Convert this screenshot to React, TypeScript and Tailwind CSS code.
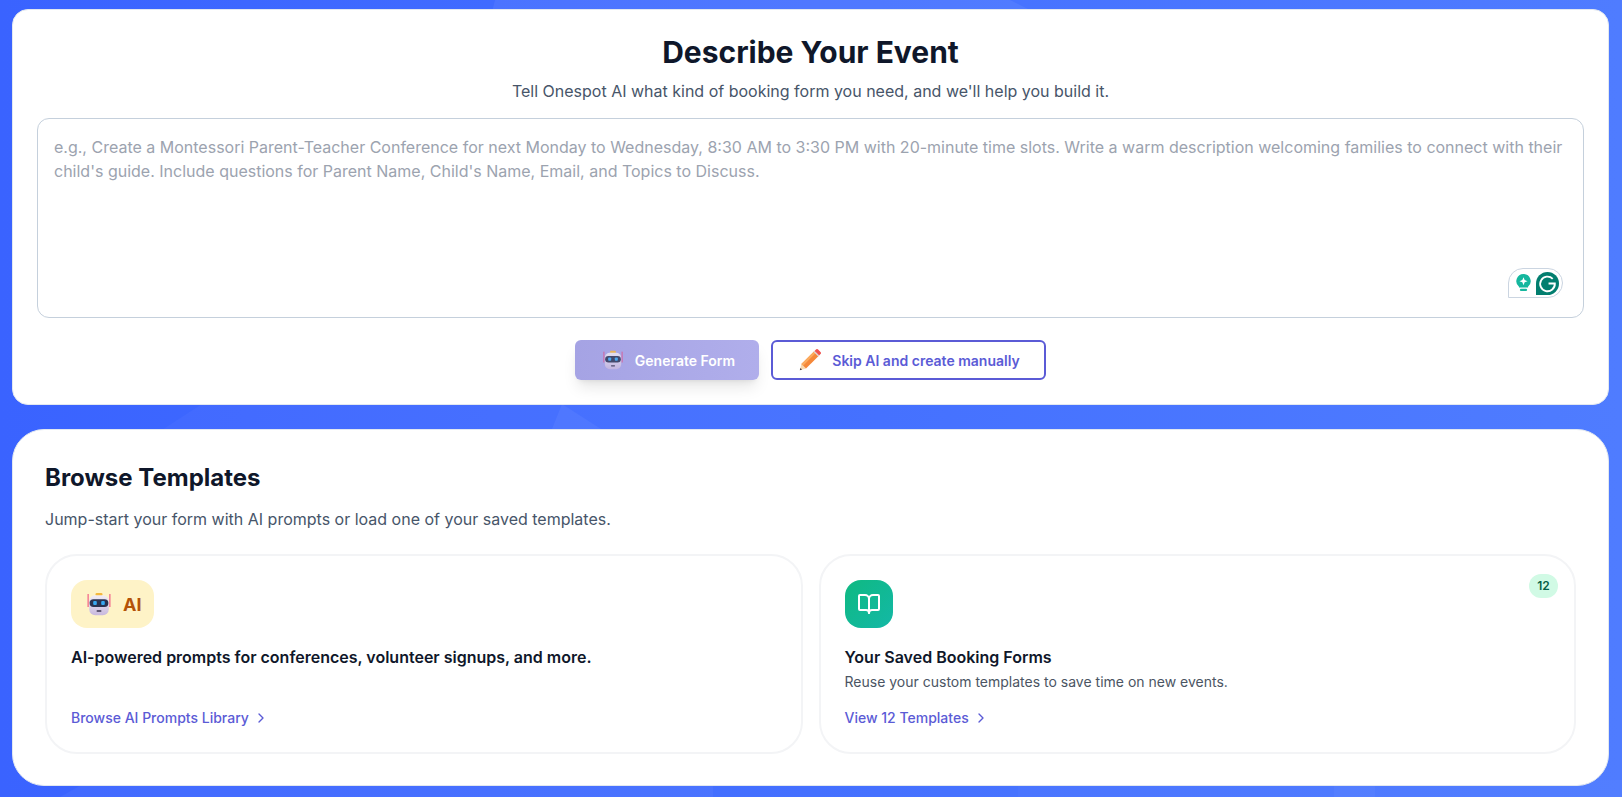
import { BookOpen, ChevronRight } from 'lucide-react'

function RobotIcon({ size = 24 }: { size?: number }) {
  return (
    <svg width={size} height={size} viewBox="0 0 24 24" className="shrink-0">
      <defs>
        <linearGradient id="robot-body" x1="0" y1="0" x2="0" y2="1">
          <stop offset="0" stopColor="#f1edf5" />
          <stop offset="1" stopColor="#c9b9de" />
        </linearGradient>
      </defs>
      <rect x="0.6" y="2" width="1" height="13" fill="#f0437a" />
      <rect x="22.4" y="2" width="1" height="13" fill="#f0437a" />
      <rect x="8.5" y="1" width="7" height="3" rx="1.2" fill="#f5b83d" />
      <rect x="2.2" y="3.2" width="19.6" height="20" rx="6" fill="url(#robot-body)" />
      <rect x="2.6" y="7.200" width="18.800" height="7.800" rx="3.900" fill="#2b3350" />
      <rect x="6.200" y="9" width="3.600" height="4" rx="1" fill="#38a8f0" />
      <rect x="14.200" y="9" width="3.600" height="4" rx="1" fill="#38a8f0" />
      <rect x="9.500" y="18.200" width="5" height="1.500" rx="0.700" fill="#3b3550" />
    </svg>
  )
}

function PencilIcon() {
  return (
    <svg width="22" height="22" viewBox="0 0 22 22" className="shrink-0">
      <path d="M0.800 21.200 2.400 15 7 19.600z" fill="#f7d9b0" />
      <path d="M0.800 21.200 1.400 18.900 3.100 20.600z" fill="#4a3a3a" />
      <path d="M2.400 15 15.500 1.900 20.100 6.500 7 19.600z" fill="#f5883a" />
      <path d="M2.400 15 15.500 1.900 17.200 3.600 4.100 16.700z" fill="#fbab5e" />
      <path d="M15.500 1.900 17 0.500a1.500 1.500 0 0 1 2.100 0l2.400 2.400a1.500 1.500 0 0 1 0 2.100l-1.400 1.500z" fill="#f0524f" />
      <path d="M14.600 2.800 15.500 1.900 20.100 6.500 19.200 7.400z" fill="#d9d9e3" />
    </svg>
  )
}

function GrammarlyBadge() {
  return (
    <div className="absolute right-[21px] bottom-[20px] flex h-[30px] w-[55px] items-center gap-[5px] rounded-[15px] rounded-bl-none border border-[#cbd5e1] bg-white pl-[7px]">
      <svg width="15" height="18" viewBox="0 0 16 20" className="shrink-0">
        <path d="M8 0a8 8 0 0 1 5 14.200V15H3v-.800A8 8 0 0 1 8 0z" fill="#15b79e" />
        <rect x="4" y="16.500" width="8" height="2.500" rx="1.200" fill="#15b79e" />
        <path d="M8 3.500 9.300 6.700 12.500 8 9.300 9.300 8 12.500 6.700 9.300 3.500 8 6.700 6.700z" fill="#fff" />
      </svg>
      <svg width="23" height="23" viewBox="0 0 22 22" className="shrink-0">
        <path d="M11 0a11 11 0 0 1 0 22H0V11A11 11 0 0 1 11 0z" fill="#027e6f" />
        <path d="M16 6.500A7 7 0 1 0 18 11h-6" fill="none" stroke="#fff" strokeWidth="1.800" />
      </svg>
    </div>
  )
}

export default function App() {
  return (
    <div className="relative min-h-screen overflow-hidden bg-gradient-to-r from-[#3a63ff] to-[#4f7cff] pt-[9px] pr-[13px] pb-[9px] pl-[12px] font-['Inter',sans-serif]">
      {/* low-poly background */}
      <svg className="absolute inset-0 h-full w-full" viewBox="0 0 1622 797" preserveAspectRatio="none">
        <path d="M495 0H1010L1130 60H480z" fill="#ffffff" fillOpacity="0.06" />
        <path d="M100 470 202 404H800V430H166z" fill="#ffffff" fillOpacity="0.03" />
        <path d="M562 404 552 429H601z" fill="#ffffff" fillOpacity="0.05" />
        <path d="M60 797 90 780H713V797z" fill="#ffffff" fillOpacity="0.04" />
        <path d="M1018 780H1622V797H1018z" fill="#ffffff" fillOpacity="0.02" />
        <path d="M1334 780H1375V797H1334z" fill="#ffffff" fillOpacity="0.03" />
      </svg>

      <div className="relative flex flex-col gap-[24px]">
        <section className="flex h-[396px] flex-col items-center rounded-[16px] border border-[#e2e8f0] bg-white px-[24px] pt-[24px]">
          <h1 className="text-[30px] leading-[36px] font-bold text-[#0f172a]">Describe Your Event</h1>
          <p className="mt-[9px] text-[16px] leading-[24px] text-[#475569]">
            Tell Onespot AI what kind of booking form you need, and we'll help you build it.
          </p>
          <div className="relative mt-[15px] h-[200px] w-full">
            <textarea
              readOnly
              className="h-full w-full resize-none rounded-[12px] border border-[#c5d0dc] px-[16px] py-[16px] text-[16px] leading-[24px] outline-none placeholder:text-[#9ca3af]"
              placeholder="e.g., Create a Montessori Parent-Teacher Conference for next Monday to Wednesday, 8:30 AM to 3:30 PM with 20-minute time slots. Write a warm description welcoming families to connect with their child's guide. Include questions for Parent Name, Child's Name, Email, and Topics to Discuss."
            />
            <GrammarlyBadge />
          </div>
          <div className="mt-[22px] flex items-center gap-[12px]">
            <button className="flex h-[40px] w-[184px] items-center justify-center gap-[12px] rounded-[6px] bg-gradient-to-r from-[#a5a3e4] to-[#b0aeeb] pl-[4px] text-[14px] font-semibold text-white shadow-lg shadow-black/10">
              <span className="opacity-80"><RobotIcon size={20} /></span>
              Generate Form
            </button>
            <button className="flex h-[40px] w-[275px] items-center justify-center gap-[11px] rounded-[6px] border-2 border-[#5b5bd6] bg-white pl-[2px] text-[14px] font-semibold text-[#5b5bd6]">
              <PencilIcon />
              Skip AI and create manually
            </button>
          </div>
        </section>

        <section className="rounded-[32px] border border-[#e2e8f0] bg-white px-[32px] pt-[32px] pb-[31px]">
          <h2 className="text-[24px] leading-[32px] font-bold text-[#0f172a]">Browse Templates</h2>
          <p className="mt-[13px] text-[16px] leading-[24px] text-[#475569]">
            Jump-start your form with AI prompts or load one of your saved templates.
          </p>
          <div className="mt-[23px] grid grid-cols-2 gap-[16px]">
            <div className="flex h-[200px] flex-col rounded-[32px] border-2 border-[#f3f4f6] bg-white p-[24px]">
              <div className="flex h-[48px] w-[83px] items-center gap-[12px] rounded-[16px] bg-[#fef3c7] pl-[16px] text-[18px] font-bold text-[#b45309]">
                <RobotIcon />
                AI
              </div>
              <p className="mt-[17px] text-[16px] leading-[24px] font-semibold text-[#0f172a]">
                AI-powered prompts for conferences, volunteer signups, and more.
              </p>
              <a className="mt-auto flex items-center gap-[4px] text-[14px] leading-[20px] font-medium text-[#5b5bd6]">
                Browse AI Prompts Library
                <ChevronRight size={16} strokeWidth={2} />
              </a>
            </div>
            <div className="relative flex h-[200px] flex-col rounded-[32px] border-2 border-[#f3f4f6] bg-white p-[24px]">
              <span className="absolute top-[18px] right-[16px] flex h-[24px] w-[29px] items-center justify-center rounded-full bg-[#d1fae5] text-[12px] font-semibold text-[#065f46]">
                12
              </span>
              <div className="flex h-[48px] w-[48px] items-center justify-center rounded-[16px] bg-gradient-to-br from-[#10b981] to-[#14b8a6]">
                <BookOpen size={24} strokeWidth={2} className="text-white" />
              </div>
              <p className="mt-[17px] text-[16px] leading-[24px] font-semibold text-[#0f172a]">Your Saved Booking Forms</p>
              <p className="mt-[3px] text-[14px] leading-[20px] text-[#4b5563]">
                Reuse your custom templates to save time on new events.
              </p>
              <a className="mt-auto flex items-center gap-[4px] text-[14px] leading-[20px] font-medium text-[#5b5bd6]">
                View 12 Templates
                <ChevronRight size={16} strokeWidth={2} />
              </a>
            </div>
          </div>
        </section>
      </div>
    </div>
  )
}
